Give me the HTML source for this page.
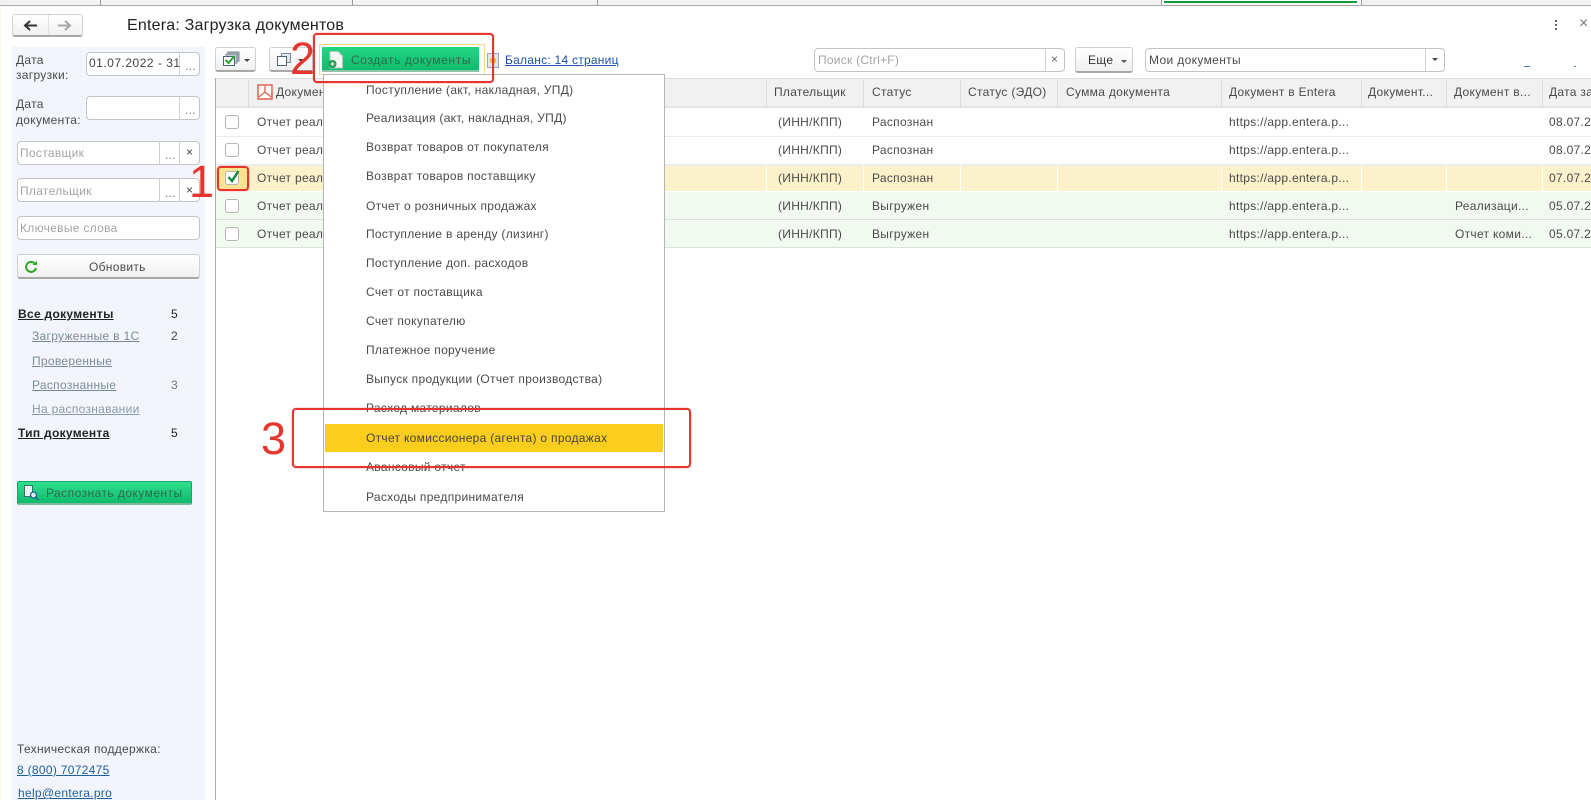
<!DOCTYPE html>
<html lang="ru"><head><meta charset="utf-8"><title>Entera: Загрузка документов</title>
<style>
html,body{margin:0;padding:0;background:#fff}
#p{position:relative;width:1591px;height:800px;overflow:hidden;background:#fff;font:12px/14px "Liberation Sans",sans-serif;color:#4a4a4a;letter-spacing:.3px;filter:blur(.3px)}
#p div,#p a,#p svg{position:absolute}
.t{white-space:nowrap;height:14px}
.b{box-sizing:border-box;border:1px solid #c4c4c4;border-radius:4px;background:#fff}
.btn{box-sizing:border-box;border:1px solid #d0d0d0;border-bottom:2px solid #a8a8a8;border-radius:3px;background:linear-gradient(#fff,#f0f0f0)}
.v{width:1px;background:#cfcfcf}
.ph{color:#a4a4a4}
.r{box-sizing:border-box;border:2px solid #e5352d;border-radius:4px;box-shadow:0 0 1px #e5352d}
.n{font-size:45px;line-height:50px;color:#e5352d;letter-spacing:0;height:50px}
.c{width:14px;height:14px;left:225px;box-sizing:border-box;border:1px solid #b4b4b4;border-radius:3px;background:#fff}
.l{color:#7a8a99;text-decoration:underline;left:32px}
.bo{font-weight:bold;color:#222;text-decoration:underline;left:18px}
.cnt{left:171px;color:#444}
.m{left:366px;color:#4a4a4a}
.h{top:85px}
</style></head><body><div id="p">

<!-- top tab strip -->
<div style="left:0;top:0;width:1591px;height:5px;background:#f1f1f1;border-bottom:1px solid #a9a9a9"></div>
<div style="left:100px;top:0;width:1px;height:5px;background:#999"></div>
<div style="left:352px;top:0;width:1px;height:5px;background:#999"></div>
<div style="left:597px;top:0;width:1px;height:5px;background:#999"></div>
<div style="left:1161px;top:0;width:1px;height:5px;background:#999"></div>
<div style="left:1361px;top:0;width:1px;height:5px;background:#999"></div>
<div style="left:1162px;top:0;width:199px;height:5px;background:#fff"></div>
<div style="left:1164px;top:1px;width:193px;height:2px;background:#0d9a3a"></div>
<div style="left:0;top:6px;width:1px;height:794px;background:#fdfbe6"></div>

<!-- nav buttons -->
<div class="btn" style="left:12px;top:14px;width:71px;height:23px"></div>
<div class="v" style="left:48px;top:15px;height:20px;background:#e2e2e2"></div>
<svg style="left:23px;top:19px" width="15" height="13" viewBox="0 0 15 13"><path d="M14 6.500H3M7 2 2 6.500 7 11" fill="none" stroke="#333" stroke-width="2"/></svg>
<svg style="left:57px;top:19px" width="15" height="13" viewBox="0 0 15 13"><path d="M1 6.500H12M8 2l5 4.500L8 11" fill="none" stroke="#a8a8a8" stroke-width="2"/></svg>
<div class="t" style="left:127px;top:17px;font-size:16px;line-height:18px;height:18px;color:#222;letter-spacing:.2px">Entera: Загрузка документов</div>

<!-- side panel -->
<div style="left:12px;top:47px;width:193px;height:753px;background:#f2f6fc"></div>
<div class="t" style="left:16px;top:53px">Дата</div>
<div class="t" style="left:16px;top:68px">загрузки:</div>
<div class="b" style="left:86px;top:52px;width:114px;height:24px"></div>
<div class="v" style="left:179px;top:52px;height:24px"></div>
<div class="t" style="left:89px;top:56px;letter-spacing:.5px;color:#444">01.07.2022 - 31</div>
<div class="t ph" style="left:185px;top:59px;color:#777">...</div>

<div class="t" style="left:16px;top:97px">Дата</div>
<div class="t" style="left:16px;top:113px">документа:</div>
<div class="b" style="left:86px;top:96px;width:114px;height:24px"></div>
<div class="v" style="left:179px;top:96px;height:24px"></div>
<div class="t ph" style="left:185px;top:103px;color:#777">...</div>

<div class="b" style="left:17px;top:141px;width:183px;height:24px"></div>
<div class="v" style="left:159px;top:141px;height:24px"></div>
<div class="v" style="left:179px;top:141px;height:24px"></div>
<div class="t ph" style="left:20px;top:146px">Поставщик</div>
<div class="t ph" style="left:165px;top:148px;color:#777">...</div>
<div class="t" style="left:186px;top:145px;color:#444">×</div>

<div class="b" style="left:17px;top:178px;width:183px;height:24px"></div>
<div class="v" style="left:159px;top:178px;height:24px"></div>
<div class="v" style="left:179px;top:178px;height:24px"></div>
<div class="t ph" style="left:20px;top:184px">Плательщик</div>
<div class="t ph" style="left:165px;top:186px;color:#777">...</div>
<div class="t" style="left:186px;top:183px;color:#444">×</div>

<div class="b" style="left:17px;top:216px;width:183px;height:24px"></div>
<div class="t ph" style="left:20px;top:221px">Ключевые слова</div>

<div class="btn" style="left:17px;top:254px;width:183px;height:25px"></div>
<svg style="left:24px;top:260px" width="14" height="14" viewBox="0 0 14 14"><path d="M11.500 4.500A5 5 0 1 0 12 8" fill="none" stroke="#2aa52a" stroke-width="2"/><path d="M8.500 5H13V1z" fill="#2aa52a"/></svg>
<div class="t" style="left:89px;top:260px">Обновить</div>

<div class="t bo" style="top:307px">Все документы</div><div class="t cnt" style="top:307px;color:#222">5</div>
<div class="t l" style="top:329px">Загруженные в 1С</div><div class="t cnt" style="top:329px">2</div>
<div class="t l" style="top:354px">Проверенные</div>
<div class="t l" style="top:378px">Распознанные</div><div class="t cnt" style="top:378px;color:#777">3</div>
<div class="t l" style="top:402px;color:#8a9aa9">На распознавании</div>
<div class="t bo" style="top:426px">Тип документа</div><div class="t cnt" style="top:426px;color:#222">5</div>

<div style="left:17px;top:481px;width:175px;height:24px;box-sizing:border-box;border:1px solid #12a866;border-bottom:2px solid #7fb89c;border-radius:2px;background:linear-gradient(#2fdf8e,#0cbc6c)"></div>
<svg style="left:23px;top:484px" width="17" height="17" viewBox="0 0 17 17"><path d="M1.500 1.500h8v11h-8z" fill="#e8f4f0" stroke="#3b6f66"/><circle cx="10.500" cy="11" r="3" fill="#d6f0ff" stroke="#1c5f95" stroke-width="1.300"/><path d="M12.500 13l3 3" stroke="#1c5f95" stroke-width="1.500"/></svg>
<div class="t" style="left:46px;top:486px;color:#2f6a4c;letter-spacing:.45px">Распознать документы</div>

<div class="t" style="left:17px;top:742px">Техническая поддержка:</div>
<div class="t" style="left:17px;top:763px;color:#1f5f9f;text-decoration:underline">8 (800) 7072475</div>
<div class="t" style="left:18px;top:786px;color:#1f5f9f;text-decoration:underline">help@entera.pro</div>

<!-- toolbar -->
<div class="btn" style="left:215px;top:47px;width:41px;height:25px"></div>
<svg style="left:222px;top:51px" width="18" height="16" viewBox="0 0 18 16"><path d="M6 1h11v9H6z" fill="#9fb0b8" stroke="#7b8b93"/><path d="M4 3h11v9H4z" fill="#c0ccd2" stroke="#7b8b93"/><path d="M1.500 5.500h11v9h-11z" fill="#fff" stroke="#48647a"/><path d="M3.500 9l3 3 6-7" fill="none" stroke="#2aa52a" stroke-width="2"/></svg>
<div style="left:244px;top:59px;border:3px solid transparent;border-top:3px solid #444;border-bottom:0"></div>
<div class="btn" style="left:269px;top:47px;width:44px;height:25px"></div>
<svg style="left:276px;top:52px" width="16" height="15" viewBox="0 0 16 15"><path d="M5.500 1.500h9v9h-9z" fill="#e4e7ea" stroke="#7b8b93"/><path d="M1.500 4.500h9v9h-9z" fill="#fff" stroke="#48647a"/></svg>
<div style="left:298px;top:59px;border:3px solid transparent;border-top:3px solid #444;border-bottom:0"></div>

<div style="left:319px;top:44px;width:166px;height:31px;box-sizing:border-box;border:1px solid #f8d68a;background:#fff"></div>
<div style="left:322px;top:47px;width:157px;height:25px;box-sizing:border-box;border-bottom:2px solid #8fc4a8;background:linear-gradient(#22d683,#0dbb6c)"></div>
<svg style="left:328px;top:51px" width="16" height="18" viewBox="0 0 16 18"><path d="M2 .5h8l4.500 4.500v12H2z" fill="#f4f7f6" stroke="#b9c6c0"/><circle cx="4.500" cy="13" r="4" fill="#1f9c4a"/><path d="M2.500 13h4M4.500 11v4" stroke="#fff" stroke-width="1.200"/></svg>
<div class="t" style="left:351px;top:53px;color:#2f6a4c;letter-spacing:.62px">Создать документы</div>
<svg style="left:487px;top:53px" width="12" height="15" viewBox="0 0 12 15"><path d="M.5.500h11v14H.5z" fill="#dfe6ee" stroke="#9aa7b5"/><circle cx="6" cy="7.500" r="3.200" fill="#f2b632"/></svg>
<a class="t" style="left:505px;top:53px;color:#1c4fa8;text-decoration:underline;letter-spacing:.25px">Баланс: 14 страниц</a>

<div class="b" style="left:814px;top:48px;width:251px;height:24px"></div>
<div class="v" style="left:1045px;top:48px;height:24px"></div>
<div class="t ph" style="left:818px;top:53px;letter-spacing:.25px">Поиск (Ctrl+F)</div>
<div class="t" style="left:1051px;top:52px;color:#666">×</div>
<div class="btn" style="left:1075px;top:47px;width:58px;height:26px"></div>
<div class="t" style="left:1088px;top:53px;color:#333">Еще</div>
<div style="left:1121px;top:60px;border:3px solid transparent;border-top:3px solid #555;border-bottom:0"></div>
<div class="b" style="left:1145px;top:48px;width:300px;height:24px"></div>
<div class="v" style="left:1425px;top:48px;height:24px"></div>
<div class="t" style="left:1149px;top:53px;letter-spacing:.35px">Мои документы</div>
<div style="left:1432px;top:58px;border:3px solid transparent;border-top:3px solid #444;border-bottom:0"></div>
<div style="left:1555px;top:20px;width:2px;height:2px;background:#666;box-shadow:0 4px #666,0 8px #666"></div>
<div class="t" style="left:1579px;top:17px;color:#777;font-size:16px">×</div>
<div style="left:1524px;top:66px;width:6px;height:1px;background:#3a78c8"></div>
<div style="left:1574px;top:66px;width:2px;height:1px;background:#3a78c8"></div>

<!-- table -->
<div style="left:215px;top:78px;width:1px;height:722px;background:#a9a9a9"></div>
<div style="left:216px;top:78px;width:1375px;height:30px;background:#f1f1f1;border-top:1px solid #dcdcdc;box-sizing:border-box;border-bottom:2px solid #e4e4e4"></div>
<div style="left:216px;top:136px;width:1375px;height:1px;background:#ececec"></div>
<div style="left:216px;top:164px;width:1375px;height:2px;background:#ececec"></div>
<div style="left:216px;top:166px;width:1375px;height:25px;background:#fbf1cb"></div>
<div style="left:218px;top:167px;width:30px;height:23px;background:#fde28f"></div>
<div style="left:216px;top:192px;width:1375px;height:28px;background:#f2f9f1;border-bottom:1px solid #d8e4d8;box-sizing:border-box"></div>
<div style="left:216px;top:220px;width:1375px;height:28px;background:#f2f9f1;border-bottom:1px solid #d8e4d8;box-sizing:border-box"></div>
<div class="v" style="left:248px;top:79px;height:28px;background:#dcdcdc"></div>
<div class="v" style="left:766px;top:79px;height:28px;background:#dcdcdc"></div>
<div class="v" style="left:863px;top:79px;height:28px;background:#dcdcdc"></div>
<div class="v" style="left:960px;top:79px;height:28px;background:#dcdcdc"></div>
<div class="v" style="left:1057px;top:79px;height:28px;background:#dcdcdc"></div>
<div class="v" style="left:1221px;top:79px;height:28px;background:#dcdcdc"></div>
<div class="v" style="left:1361px;top:79px;height:28px;background:#dcdcdc"></div>
<div class="v" style="left:1446px;top:79px;height:28px;background:#dcdcdc"></div>
<div class="v" style="left:1542px;top:79px;height:28px;background:#dcdcdc"></div>
<div class="v" style="left:766px;top:166px;height:25px;background:#fff"></div>
<div class="v" style="left:863px;top:166px;height:25px;background:#fff"></div>
<div class="v" style="left:960px;top:166px;height:25px;background:#fff"></div>
<div class="v" style="left:1057px;top:166px;height:25px;background:#fff"></div>
<div class="v" style="left:1221px;top:166px;height:25px;background:#fff"></div>
<div class="v" style="left:1361px;top:166px;height:25px;background:#fff"></div>
<div class="v" style="left:1446px;top:166px;height:25px;background:#fff"></div>
<div class="v" style="left:1542px;top:166px;height:25px;background:#fff"></div>

<svg style="left:257px;top:84px" width="16" height="16" viewBox="0 0 16 16"><path d="M1 1h14v14H1z" fill="#fff" stroke="#e0604c" stroke-width="1.500"/><path d="M8 2v6L2 13M8 8l6 5" fill="none" stroke="#e0604c" stroke-width="1.300"/></svg>
<div class="t h" style="left:276px">Документ</div>
<div class="t h" style="left:774px">Плательщик</div>
<div class="t h" style="left:872px">Статус</div>
<div class="t h" style="left:968px">Статус (ЭДО)</div>
<div class="t h" style="left:1066px">Сумма документа</div>
<div class="t h" style="left:1229px">Документ в Entera</div>
<div class="t h" style="left:1368px">Документ...</div>
<div class="t h" style="left:1454px">Документ в...</div>
<div class="t h" style="left:1549px;width:42px;overflow:hidden">Дата загрузки</div>

<div class="c" style="top:115px"></div><div class="c" style="top:143px"></div>
<div class="c" style="top:171px"></div><div class="c" style="top:199px"></div><div class="c" style="top:227px"></div>
<svg style="left:226px;top:169px" width="15" height="15" viewBox="0 0 15 15"><path d="M2.500 8l3.500 4 6.500-10" fill="none" stroke="#128a3a" stroke-width="2.400"/></svg>

<div class="t" style="left:257px;top:115px">Отчет реализации</div>
<div class="t" style="left:257px;top:143px">Отчет реализации</div>
<div class="t" style="left:257px;top:171px">Отчет реализации</div>
<div class="t" style="left:257px;top:199px">Отчет реализации</div>
<div class="t" style="left:257px;top:227px">Отчет реализации</div>

<div class="t" style="left:778px;top:115px">(ИНН/КПП)</div><div class="t" style="left:872px;top:115px">Распознан</div><div class="t" style="left:1229px;top:115px">https://app.entera.p...</div><div class="t" style="left:1549px;top:115px">08.07.2</div>
<div class="t" style="left:778px;top:143px">(ИНН/КПП)</div><div class="t" style="left:872px;top:143px">Распознан</div><div class="t" style="left:1229px;top:143px">https://app.entera.p...</div><div class="t" style="left:1549px;top:143px">08.07.2</div>
<div class="t" style="left:778px;top:171px">(ИНН/КПП)</div><div class="t" style="left:872px;top:171px">Распознан</div><div class="t" style="left:1229px;top:171px">https://app.entera.p...</div><div class="t" style="left:1549px;top:171px">07.07.2</div>
<div class="t" style="left:778px;top:199px">(ИНН/КПП)</div><div class="t" style="left:872px;top:199px">Выгружен</div><div class="t" style="left:1229px;top:199px">https://app.entera.p...</div><div class="t" style="left:1455px;top:199px">Реализаци...</div><div class="t" style="left:1549px;top:199px">05.07.2</div>
<div class="t" style="left:778px;top:227px">(ИНН/КПП)</div><div class="t" style="left:872px;top:227px">Выгружен</div><div class="t" style="left:1229px;top:227px">https://app.entera.p...</div><div class="t" style="left:1455px;top:227px">Отчет коми...</div><div class="t" style="left:1549px;top:227px">05.07.2</div>

<!-- dropdown -->
<div style="left:323px;top:74px;width:342px;height:438px;box-sizing:border-box;background:#fff;border:1px solid #b4b4b4"></div>
<div style="left:325px;top:424px;width:338px;height:28px;background:#fbcd1c"></div>
<div class="t m" style="top:83px">Поступление (акт, накладная, УПД)</div>
<div class="t m" style="top:111px">Реализация (акт, накладная, УПД)</div>
<div class="t m" style="top:140px">Возврат товаров от покупателя</div>
<div class="t m" style="top:169px">Возврат товаров поставщику</div>
<div class="t m" style="top:199px">Отчет о розничных продажах</div>
<div class="t m" style="top:227px">Поступление в аренду (лизинг)</div>
<div class="t m" style="top:256px">Поступление доп. расходов</div>
<div class="t m" style="top:285px">Счет от поставщика</div>
<div class="t m" style="top:314px">Счет покупателю</div>
<div class="t m" style="top:343px">Платежное поручение</div>
<div class="t m" style="top:372px">Выпуск продукции (Отчет производства)</div>
<div class="t m" style="top:401px">Расход материалов</div>
<div class="t m" style="top:431px;color:#444">Отчет комиссионера (агента) о продажах</div>
<div class="t m" style="top:460px">Авансовый отчет</div>
<div class="t m" style="top:490px">Расходы предпринимателя</div>

<!-- annotations -->
<div class="r" style="left:217px;top:166px;width:32px;height:25px"></div>
<div class="r" style="left:313px;top:33px;width:181px;height:50px"></div>
<div class="r" style="left:292px;top:408px;width:399px;height:60px"></div>
<div class="t n" style="left:189px;top:157px;height:41px;overflow:hidden">1</div>
<div class="t n" style="left:290px;top:34px">2</div>
<div class="t n" style="left:261px;top:414px">3</div>
</div></body></html>
